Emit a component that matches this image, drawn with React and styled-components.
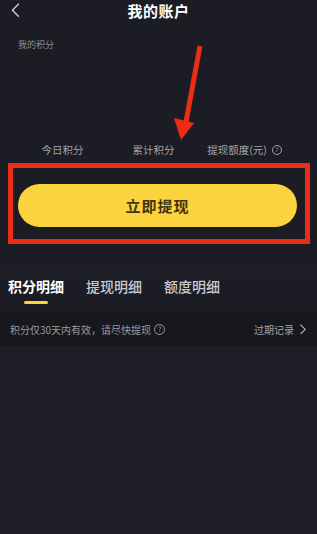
import React from 'react'
import styled, { createGlobalStyle } from 'styled-components'

const GlobalStyle = createGlobalStyle`
  html, body {
    margin: 0;
    padding: 0;
    background: #1c1c24;
  }
  body {
    font-family: "Noto Sans CJK SC", "Noto Sans", sans-serif;
  }
`

const Page = styled.div`
  position: relative;
  width: 317px;
  min-height: 534px;
  background: #1e1e27;
  color: #fff;
  overflow: hidden;
`

const Top = styled.div`
  background: #1c1c24;
  padding-bottom: 22px;
`

const Header = styled.header`
  position: relative;
  height: 22px;
  display: flex;
  align-items: center;
  justify-content: center;
`

const Back = styled.span`
  position: absolute;
  left: 10px;
  top: 3px;
  display: flex;
`

const Title = styled.h1`
  margin: 0;
  font-size: 15px;
  font-weight: 700;
  line-height: 20px;
  color: #fff;
  letter-spacing: 0.5px;
`

const SmallLabel = styled.div`
  margin: 16px 0 0 18px;
  font-size: 9px;
  line-height: 14px;
  color: #8b8b95;
`

const Stats = styled.div`
  display: grid;
  grid-template-columns: repeat(3, 1fr);
  padding: 0 27px 0 17px;
  margin-top: 91px;
`

const StatLabel = styled.div`
  display: flex;
  align-items: center;
  justify-content: center;
  gap: 2px;
  font-size: 10.5px;
  line-height: 14px;
  color: #a3a3ac;
`

const Help = styled.span`
  display: inline-flex;
  align-items: center;
  justify-content: center;
  width: ${p => p.size}px;
  height: ${p => p.size}px;
  border: 1px solid ${p => p.color};
  border-radius: 50%;
  box-sizing: border-box;
  font-size: ${p => p.size - 4}px;
  line-height: 1;
  color: ${p => p.color};
  margin-left: 3px;
`

const Highlight = styled.div`
  margin: 6px 7px 0 8px;
  border: 5px solid #ea2d14;
  padding: 16px 8px 12px 5px;
`

const WithdrawButton = styled.button`
  display: block;
  width: 100%;
  height: 43px;
  border: none;
  border-radius: 22px;
  background: #fbd43d;
  color: #3e3310;
  font-family: inherit;
  font-size: 15px;
  font-weight: 700;
  letter-spacing: 1px;
  cursor: pointer;
`

const Tabs = styled.nav`
  display: flex;
  gap: 22px;
  padding: 0 0 0 8px;
  margin-top: 10px;
  background: #1c1c24;
`

const Tab = styled.div`
  position: relative;
  font-size: 14px;
  line-height: 20px;
  padding-bottom: 16px;
  color: ${p => (p.active ? '#ffffff' : '#c9c9d0')};
  font-weight: ${p => (p.active ? 700 : 500)};

  &::after {
    content: '';
    display: ${p => (p.active ? 'block' : 'none')};
    position: absolute;
    left: 50%;
    bottom: 8px;
    width: 24px;
    height: 3px;
    margin-left: -12px;
    border-radius: 2px;
    background: #fbd43d;
  }
`

const Notice = styled.div`
  display: flex;
  align-items: center;
  justify-content: space-between;
  height: 34px;
  padding: 0 10px;
  background: #17171e;
  font-size: 10px;
  color: #9a9aa3;
`

const NoticeText = styled.span`
  display: flex;
  align-items: center;
`

const Expired = styled.span`
  display: flex;
  align-items: center;
  gap: 4px;
  color: #a3a3ac;
`

const Arrow = styled.svg`
  position: absolute;
  left: 170px;
  top: 44px;
`

function Chevron({ dir = 'left', size = 10, color = '#bbb' }) {
  const d = dir === 'left' ? 'M7 1 L2 6 L7 11' : 'M3 1 L8 6 L3 11'
  return (
    <svg width={size} height={size * 1.2} viewBox="0 0 10 12" fill="none">
      <path d={d} stroke={color} strokeWidth="1.3" strokeLinecap="round" strokeLinejoin="round" />
    </svg>
  )
}

export default function App() {
  return (
    <>
      <GlobalStyle />
      <Page>
        <Top>
          <Header>
            <Back>
              <Chevron dir="left" size={12} color="#c5c5cc" />
            </Back>
            <Title>我的账户</Title>
          </Header>
          <SmallLabel>我的积分</SmallLabel>
          <Stats>
            <StatLabel>今日积分</StatLabel>
            <StatLabel>累计积分</StatLabel>
            <StatLabel>
              提现额度(元)
              <Help size={10} color="#a3a3ac">?</Help>
            </StatLabel>
          </Stats>
          <Highlight>
            <WithdrawButton>立即提现</WithdrawButton>
          </Highlight>
        </Top>
        <Tabs>
          <Tab active>积分明细</Tab>
          <Tab>提现明细</Tab>
          <Tab>额度明细</Tab>
        </Tabs>
        <Notice>
          <NoticeText>
            积分仅30天内有效，请尽快提现
            <Help size={11} color="#9a9aa3">?</Help>
          </NoticeText>
          <Expired>
            过期记录
            <Chevron dir="right" size={9} color="#b5b5bd" />
          </Expired>
        </Notice>
        <Arrow width="40" height="100" viewBox="0 0 40 100">
          <path d="M30 2 L16 78" stroke="#ea2d14" strokeWidth="5" strokeLinecap="butt" />
          <path d="M4 74 L24 79 L11 96 Z" fill="#ea2d14" />
        </Arrow>
      </Page>
    </>
  )
}
